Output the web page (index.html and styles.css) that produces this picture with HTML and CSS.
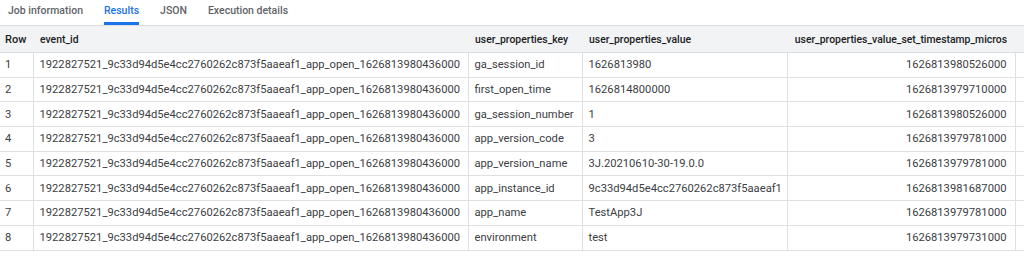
FILE: index.html
```html
<html>
<head>
<title>Query results</title>
<link rel="stylesheet" href="styles.css">
</head>
<body>
<div class="tabs">
	<span class="tab">Job information</span>
	<span class="tab active">Results</span>
	<span class="tab">JSON</span>
	<span class="tab">Execution details</span>
</div>
<table class="results">
	<colgroup>
		<col class="c-row"><col class="c-event"><col class="c-key"><col class="c-value"><col class="c-ts"><col class="c-rest">
	</colgroup>
	<thead>
		<tr><th>Row</th><th>event_id</th><th>user_properties_key</th><th>user_properties_value</th><th class="num">user_properties_value_set_timestamp_micros</th><th></th></tr>
	</thead>
	<tbody>
		<tr><td>1</td><td>1922827521_9c33d94d5e4cc2760262c873f5aaeaf1_app_open_1626813980436000</td><td>ga_session_id</td><td>1626813980</td><td class="num">1626813980526000</td><td></td></tr>
		<tr><td>2</td><td>1922827521_9c33d94d5e4cc2760262c873f5aaeaf1_app_open_1626813980436000</td><td>first_open_time</td><td>1626814800000</td><td class="num">1626813979710000</td><td></td></tr>
		<tr><td>3</td><td>1922827521_9c33d94d5e4cc2760262c873f5aaeaf1_app_open_1626813980436000</td><td>ga_session_number</td><td>1</td><td class="num">1626813980526000</td><td></td></tr>
		<tr><td>4</td><td>1922827521_9c33d94d5e4cc2760262c873f5aaeaf1_app_open_1626813980436000</td><td>app_version_code</td><td>3</td><td class="num">1626813979781000</td><td></td></tr>
		<tr><td>5</td><td>1922827521_9c33d94d5e4cc2760262c873f5aaeaf1_app_open_1626813980436000</td><td>app_version_name</td><td>3J.20210610-30-19.0.0</td><td class="num">1626813979781000</td><td></td></tr>
		<tr><td>6</td><td>1922827521_9c33d94d5e4cc2760262c873f5aaeaf1_app_open_1626813980436000</td><td>app_instance_id</td><td>9c33d94d5e4cc2760262c873f5aaeaf1</td><td class="num">1626813981687000</td><td></td></tr>
		<tr><td>7</td><td>1922827521_9c33d94d5e4cc2760262c873f5aaeaf1_app_open_1626813980436000</td><td>app_name</td><td>TestApp3J</td><td class="num">1626813979781000</td><td></td></tr>
		<tr><td>8</td><td>1922827521_9c33d94d5e4cc2760262c873f5aaeaf1_app_open_1626813980436000</td><td>environment</td><td>test</td><td class="num">1626813979731000</td><td></td></tr>
	</tbody>
</table>
</body>
</html>
```
FILE: styles.css
```css
body {
	margin:0;
	background:#fff;
	font-family:Roboto,'Liberation Sans',sans-serif;
	color:#3c4043;
	overflow:hidden;
}
.tabs {
	display:flex;
	height:25px;
	padding-left:8px;
	box-sizing:border-box;
}
.tab {
	font-size:10.5px;
	font-weight:500;
	color:#5f6368;
	padding-top:4px;
	margin-right:21px;
	box-sizing:border-box;
	height:25px;
}
.tab.active {
	color:#1a73e8;
	border-bottom:3px solid #1a73e8;
}
.results {
	border-collapse:collapse;
	table-layout:fixed;
	width:1024px;
	font-size:11.2px;
	border-top:1px solid #dadce0;
}
.c-row { width:33px; }
.c-event { width:435px; }
.c-key { width:114px; }
.c-value { width:205px; }
.c-ts { width:228px; }
.c-rest { width:9px; }
.results th {
	background:#f1f3f4;
	font-size:10.4px;
	font-weight:500;
	color:#202124;
	text-align:left;
	height:27px;
	padding:0 5px 0 7px;
	border-bottom:1px solid #dadce0;
	white-space:nowrap;
	overflow:hidden;
}
.results td {
	height:24.7px;
	padding:0 6px;
	border:1px solid #e0e0e0;
	border-top:none;
	white-space:nowrap;
	overflow:hidden;
}
.results th:first-child, .results td:first-child {
	border-left:none;
	padding-left:5px;
}
.results th:first-child {
	font-size:11px;
}
.results th:last-child, .results td:last-child {
	padding:0;
	border-right:none;
}
.results .num {
	text-align:right;
	padding-right:8px;
}
```
